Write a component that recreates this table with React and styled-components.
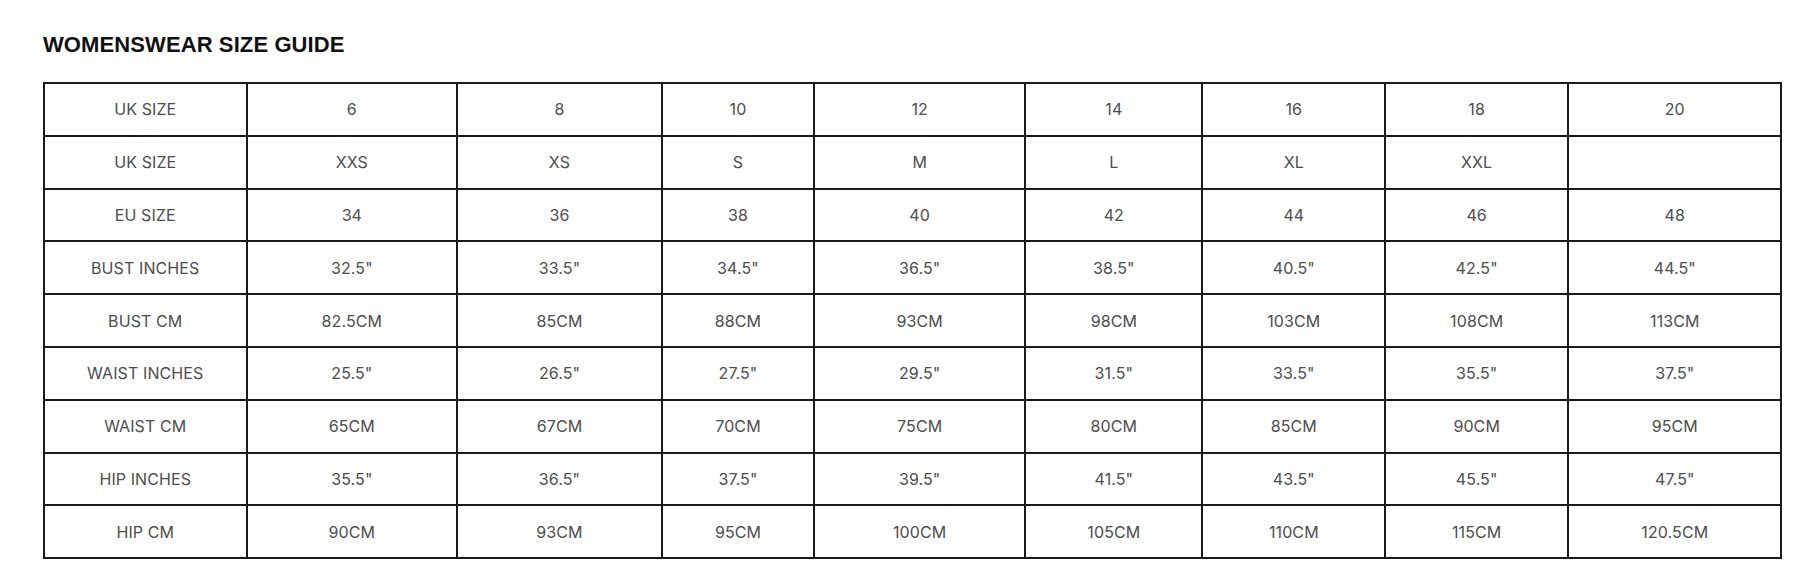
import React from "react";
import styled, { createGlobalStyle } from "styled-components";

const GlobalStyle = createGlobalStyle`
  html, body {
    margin: 0;
    padding: 0;
    background: #ffffff;
  }
  body {
    font-family: Inter, "Liberation Sans", Arial, sans-serif;
  }
`;

const Page = styled.main`
  padding: 32px 38px 0 43px;
  display: flex;
  flex-direction: column;
`;

const Title = styled.h2`
  margin: 0 0 24px 0;
  font-family: "Liberation Sans", Arial, sans-serif;
  font-weight: 700;
  font-size: 22px;
  line-height: 26px;
  color: #111111;
  letter-spacing: 0.1px;
`;

const Table = styled.table`
  border-collapse: collapse;
  table-layout: fixed;
  width: 1738px;
`;

const Cell = styled.td`
  border: 2px solid #1a1a1a;
  height: 50.8px;
  padding: 0;
  text-align: center;
  vertical-align: middle;
  font-family: Inter, "Liberation Sans", Arial, sans-serif;
  font-size: 16px;
  font-weight: 400;
  color: #4d4d4d;
  letter-spacing: 0.1px;
`;

const widths = [202.5, 210.7, 204.6, 152.4, 211, 177.3, 182.7, 183, 213.3];

const rows = [
  ["UK SIZE", "6", "8", "10", "12", "14", "16", "18", "20"],
  ["UK SIZE", "XXS", "XS", "S", "M", "L", "XL", "XXL", ""],
  ["EU SIZE", "34", "36", "38", "40", "42", "44", "46", "48"],
  ["BUST INCHES", '32.5"', '33.5"', '34.5"', '36.5"', '38.5"', '40.5"', '42.5"', '44.5"'],
  ["BUST CM", "82.5CM", "85CM", "88CM", "93CM", "98CM", "103CM", "108CM", "113CM"],
  ["WAIST INCHES", '25.5"', '26.5"', '27.5"', '29.5"', '31.5"', '33.5"', '35.5"', '37.5"'],
  ["WAIST CM", "65CM", "67CM", "70CM", "75CM", "80CM", "85CM", "90CM", "95CM"],
  ["HIP INCHES", '35.5"', '36.5"', '37.5"', '39.5"', '41.5"', '43.5"', '45.5"', '47.5"'],
  ["HIP CM", "90CM", "93CM", "95CM", "100CM", "105CM", "110CM", "115CM", "120.5CM"],
];

export default function App() {
  return (
    <>
      <GlobalStyle />
      <Page>
        <Title>WOMENSWEAR SIZE GUIDE</Title>
        <Table>
          <colgroup>
            {widths.map((w, i) => (
              <col key={i} style={{ width: `${w}px` }} />
            ))}
          </colgroup>
          <tbody>
            {rows.map((row, r) => (
              <tr key={r}>
                {row.map((c, i) => (
                  <Cell key={i}>{c}</Cell>
                ))}
              </tr>
            ))}
          </tbody>
        </Table>
      </Page>
    </>
  );
}
